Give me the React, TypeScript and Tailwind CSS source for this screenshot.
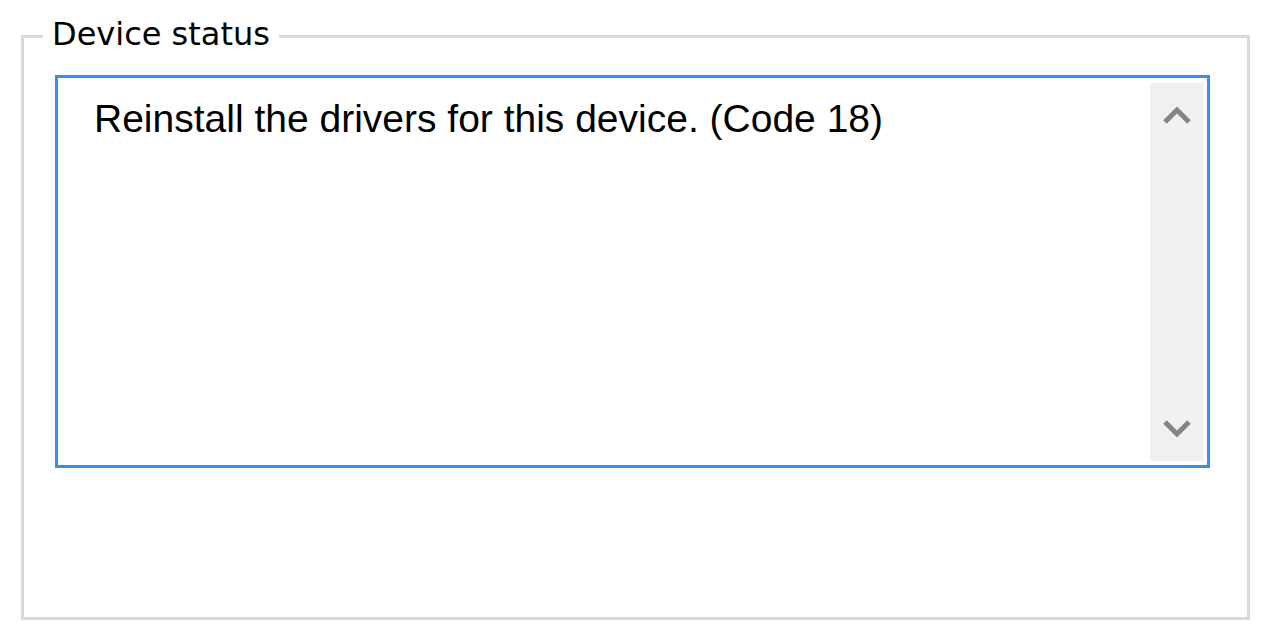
import React from "react";

export default function App() {
  return (
    <div className="w-[1263px] h-[640px] bg-white pl-[21px] pt-[35px]">
      <div className="relative w-[1229px] h-[585px] border-[3px] border-[#d9d9d9]">
        <span
          className="absolute left-[19px] top-[-20px] bg-white px-[9px] text-[32px] leading-none text-black"
          style={{ fontFamily: '"DejaVu Sans", sans-serif' }}
        >
          Device status
        </span>
        <div className="ml-[31px] mt-[37px] w-[1155px] h-[393px] border-[3px] border-[#3a8de9] bg-white flex">
          <div
            className="flex-1 pl-[36px] pt-[21px] text-[39px] leading-none text-black"
            style={{ fontFamily: '"Liberation Sans", Arial, sans-serif' }}
          >
            Reinstall the drivers for this device. (Code 18)
          </div>
          <div className="w-[53px] mt-[5px] mb-[4px] mr-[4px] bg-[#f0f0f0] flex flex-col items-center justify-between py-[22px]">
            <svg width="30" height="20" viewBox="0 0 30 20">
              <polyline points="3,17 15,5 27,17" fill="none" stroke="#858585" strokeWidth="5" />
            </svg>
            <svg width="30" height="20" viewBox="0 0 30 20">
              <polyline points="3,3 15,15 27,3" fill="none" stroke="#858585" strokeWidth="5" />
            </svg>
          </div>
        </div>
      </div>
    </div>
  );
}
